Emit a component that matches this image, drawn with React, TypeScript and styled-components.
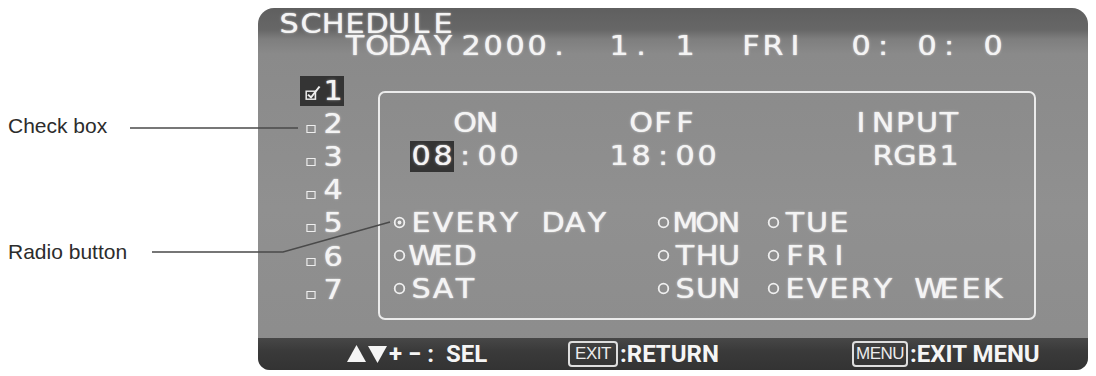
import React from 'react';
import styled, { createGlobalStyle } from 'styled-components';

const CELL = 22;
const ROW = 33.2;

const GlobalStyle = createGlobalStyle`
  html, body {
    margin: 0;
    padding: 0;
    background: #ffffff;
  }
  body {
    width: 1096px;
    height: 376px;
    overflow: hidden;
    font-family: 'Liberation Sans', Arial, sans-serif;
  }
`;

const Stage = styled.div`
  position: relative;
  display: flex;
  width: 1096px;
  height: 376px;
  padding-top: 8px;
  box-sizing: border-box;
`;

const Notes = styled.div`
  width: 258px;
  flex-shrink: 0;
  display: flex;
  flex-direction: column;
  padding: 106px 0 0 8px;
  box-sizing: border-box;
`;

const Note = styled.span<{ $gap?: number }>`
  font-size: 21px;
  line-height: 24px;
  color: #2c2c2c;
  margin-top: ${(p) => p.$gap ?? 0}px;
`;

const Leaders = styled.svg`
  position: absolute;
  left: 0;
  top: 0;
  pointer-events: none;
`;

const Screen = styled.div`
  width: 830px;
  height: 362px;
  display: flex;
  flex-direction: column;
  border-radius: 16px 16px 12px 12px;
  overflow: hidden;
  background: linear-gradient(
    180deg,
    #5f5f5f 0px,
    #676767 22px,
    #7e7e7e 31px,
    #8a8a8a 46px,
    #909090 200px,
    #8c8c8c 100%
  );
  color: #f4f4f4;
  font-family: 'DejaVu Sans', Verdana, sans-serif;
  font-size: 26px;
  text-shadow: 0 0 1px rgba(255, 255, 255, 0.9), 0 0 3px rgba(255, 255, 255, 0.35);
`;

const TitleRow = styled.div`
  display: flex;
  height: 22px;
  line-height: 22px;
  margin-top: 5px;
  padding-left: 20px;
`;

const TodayRow = styled.div`
  display: flex;
  height: 22px;
  line-height: 22px;
  padding-left: 86px;
`;

const Seg = styled.span<{ $w?: number }>`
  display: flex;
  flex-shrink: 0;
  ${(p) => (p.$w ? `width: ${p.$w}px;` : '')}
`;

const Cell = styled.span`
  display: inline-block;
  width: ${CELL}px;
  flex-shrink: 0;
  text-align: center;
  white-space: pre;
  transform: scaleX(1.16);
`;

const Body = styled.div`
  display: flex;
  margin-top: 17px;
  padding-left: 42px;
`;

const CheckList = styled.div`
  width: 44px;
  display: flex;
  flex-direction: column;
`;

const CheckRow = styled.div`
  height: ${ROW}px;
  display: flex;
  align-items: center;
`;

const CheckBody = styled.div<{ $on?: boolean }>`
  display: flex;
  align-items: center;
  height: 30px;
  line-height: 30px;
  background: ${(p) => (p.$on ? '#343434' : 'transparent')};
`;

const Square = styled.span`
  display: inline-block;
  width: 8px;
  height: 8px;
  border: 1.5px solid #eeeeee;
  box-sizing: border-box;
  vertical-align: baseline;
`;

const Tick = styled.svg`
  display: inline-block;
  vertical-align: baseline;
  margin-left: 4px;
`;

const Frame = styled.div`
  margin: 17px 0 0 34px;
  width: 658px;
  height: 229px;
  border: 2px solid #ebebeb;
  border-radius: 7px;
  box-sizing: border-box;
  padding: 14.2px 0 0 8px;
  display: flex;
  flex-direction: column;
`;

const BoxRow = styled.div<{ $indent?: number }>`
  height: ${ROW}px;
  display: flex;
  align-items: center;
  line-height: 31px;
  padding-left: ${(p) => (p.$indent ?? 0) * CELL}px;
`;

const Slot = styled.div<{ $span?: number }>`
  display: flex;
  align-items: center;
  flex-shrink: 0;
  ${(p) => (p.$span ? `width: ${p.$span * CELL}px;` : '')}
`;

const Mark = styled.span`
  display: flex;
  height: 31px;
  background: #343434;
`;

const RadioCell = styled.span`
  display: inline-flex;
  width: ${CELL}px;
  height: 31px;
  align-items: center;
  justify-content: center;
  padding-bottom: 2px;
  box-sizing: border-box;
  flex-shrink: 0;
`;

const Footer = styled.div`
  margin-top: auto;
  height: 32px;
  display: flex;
  align-items: center;
  padding-left: 89px;
  background: linear-gradient(180deg, #474747 0%, #3a3a3a 40%, #333333 100%);
  font-family: Roboto, 'Liberation Sans', sans-serif;
  font-weight: 700;
  font-size: 24px;
  color: #f5f5f5;
  text-shadow: none;
`;

const FootGroup = styled.div<{ $w?: number }>`
  display: flex;
  align-items: center;
  flex-shrink: 0;
  ${(p) => (p.$w ? `width: ${p.$w}px;` : '')}
`;

const FootText = styled.span`
  white-space: pre;
  line-height: 30px;
`;

const Key = styled.span<{ $w: number }>`
  display: inline-flex;
  align-items: center;
  justify-content: center;
  width: ${(p) => p.$w}px;
  height: 26px;
  border: 2px solid #dedede;
  border-radius: 4px;
  box-sizing: border-box;
  font-family: 'Liberation Sans', Arial, sans-serif;
  font-weight: 400;
  font-size: 17px;
  letter-spacing: -0.5px;
  color: #ececec;
  margin-right: 2px;
`;

function Osd({ text }: { text: string }) {
  return (
    <>
      {Array.from(text).map((ch, i) => (
        <Cell key={i}>{ch}</Cell>
      ))}
    </>
  );
}

function Radio({ on }: { on?: boolean }) {
  return (
    <RadioCell>
      <svg width="13" height="13" viewBox="0 0 13 13">
        <circle cx="6.5" cy="6.5" r="4.8" fill="none" stroke="#efefef" strokeWidth="1.8" />
        {on && <circle cx="6.5" cy="6.5" r="1.9" fill="#efefef" />}
      </svg>
    </RadioCell>
  );
}

function Option({ label, on }: { label: string; on?: boolean }) {
  return (
    <>
      <Radio on={on} />
      <Osd text={label} />
    </>
  );
}

const today = [
  { text: 'TODAY', w: 116 },
  { text: '2000.', w: 148 },
  { text: '1.', w: 66 },
  { text: '1', w: 66 },
  { text: 'FRI', w: 110 },
  { text: '0: 0: 0' }
];

const slots = [1, 2, 3, 4, 5, 6, 7];

export default function App() {
  return (
    <>
      <GlobalStyle />
      <Stage>
        <Notes>
          <Note>Check box</Note>
          <Note $gap={102}>Radio button</Note>
        </Notes>
        <Screen>
          <TitleRow>
            <Osd text="SCHEDULE" />
          </TitleRow>
          <TodayRow>
            {today.map((s, i) => (
              <Seg key={i} $w={s.w}>
                <Osd text={s.text} />
              </Seg>
            ))}
          </TodayRow>
          <Body>
            <CheckList>
              {slots.map((n) => (
                <CheckRow key={n}>
                  <CheckBody $on={n === 1}>
                    <Cell>
                      {n === 1 ? (
                        <Tick width="14" height="15" viewBox="0 0 14 15">
                          <rect x="0.8" y="6.2" width="8" height="8" fill="none" stroke="#eeeeee" strokeWidth="1.4" />
                          <path d="M2.4 9.6 L5 12.4 L12.4 1.6" fill="none" stroke="#eeeeee" strokeWidth="1.8" />
                        </Tick>
                      ) : (
                        <Square />
                      )}
                    </Cell>
                    <Cell>{n}</Cell>
                  </CheckBody>
                </CheckRow>
              ))}
            </CheckList>
            <Frame>
              <BoxRow $indent={3}>
                <Slot $span={8}>
                  <Osd text="ON" />
                </Slot>
                <Slot $span={10}>
                  <Osd text="OFF" />
                </Slot>
                <Slot>
                  <Osd text="INPUT" />
                </Slot>
              </BoxRow>
              <BoxRow $indent={1}>
                <Slot $span={9}>
                  <Mark>
                    <Osd text="08" />
                  </Mark>
                  <Osd text=":00" />
                </Slot>
                <Slot $span={12}>
                  <Osd text="18:00" />
                </Slot>
                <Slot>
                  <Osd text="RGB1" />
                </Slot>
              </BoxRow>
              <BoxRow />
              <BoxRow>
                <Slot $span={12}>
                  <Option label="EVERY DAY" on />
                </Slot>
                <Slot $span={5}>
                  <Option label="MON" />
                </Slot>
                <Slot>
                  <Option label="TUE" />
                </Slot>
              </BoxRow>
              <BoxRow>
                <Slot $span={12}>
                  <Option label="WED" />
                </Slot>
                <Slot $span={5}>
                  <Option label="THU" />
                </Slot>
                <Slot>
                  <Option label="FRI" />
                </Slot>
              </BoxRow>
              <BoxRow>
                <Slot $span={12}>
                  <Option label="SAT" />
                </Slot>
                <Slot $span={5}>
                  <Option label="SUN" />
                </Slot>
                <Slot>
                  <Option label="EVERY WEEK" />
                </Slot>
              </BoxRow>
            </Frame>
          </Body>
          <Footer>
            <FootGroup $w={221}>
              <svg width="42" height="18" viewBox="0 0 42 18">
                <polygon points="0,17 9.5,0 19,17" fill="#f5f5f5" />
                <polygon points="21,1 40,1 30.5,18" fill="#f5f5f5" />
              </svg>
              <FootText>{'+ \u2212 :  SEL'}</FootText>
            </FootGroup>
            <FootGroup $w={284}>
              <Key $w={50}>EXIT</Key>
              <FootText>:RETURN</FootText>
            </FootGroup>
            <FootGroup>
              <Key $w={56}>MENU</Key>
              <FootText>:EXIT MENU</FootText>
            </FootGroup>
          </Footer>
        </Screen>
        <Leaders width="1096" height="376" viewBox="0 0 1096 376">
          <line x1="130" y1="128" x2="298" y2="128" stroke="#4a4a4a" strokeWidth="1.5" />
          <polyline points="152,252 283,252 390,222" fill="none" stroke="#4a4a4a" strokeWidth="1.5" />
        </Leaders>
      </Stage>
    </>
  );
}
